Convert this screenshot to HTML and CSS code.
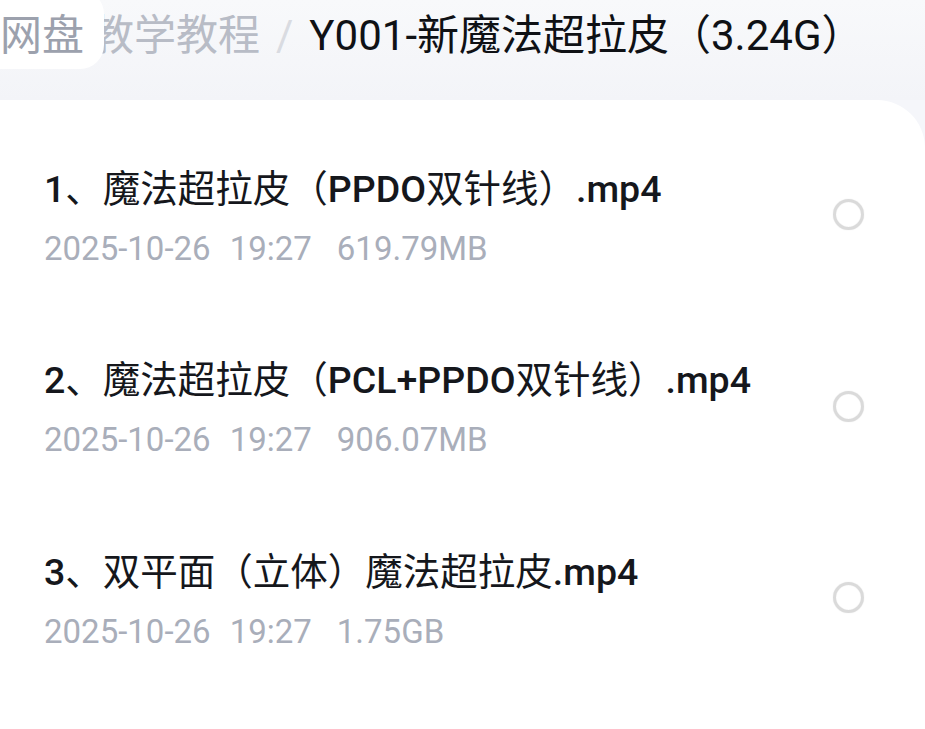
FILE: index.html
```html
<!DOCTYPE html>
<html lang="zh-CN">
<head>
    <meta charset="UTF-8">
    <meta name="viewport" content="width=device-width, initial-scale=1.0">
    <title>Y001-新魔法超拉皮（3.24G）</title>
    <link rel="stylesheet" href="styles.css">
</head>
<body>
    <div class="header">
        <div class="root-crumb">网盘</div>
        <div class="crumbs">
            <span class="crumb">教学教程</span>
            <span class="crumb-sep">/</span>
            <span class="crumb current">Y001-新魔法超拉皮（3.24G）</span>
        </div>
    </div>

    <div class="file-list">
        <div class="file-row">
            <div class="file-info">
                <div class="file-name"><b>1</b>、魔法超拉皮（<b>PPDO</b>双针线）<b>.mp4</b></div>
                <div class="file-meta">
                    <span class="meta-date">2025-10-26</span>
                    <span class="meta-time">19:27</span>
                    <span class="meta-size">619.79MB</span>
                </div>
            </div>
            <span class="radio"></span>
        </div>

        <div class="file-row">
            <div class="file-info">
                <div class="file-name"><b>2</b>、魔法超拉皮（<b>PCL+PPDO</b>双针线）<b>.mp4</b></div>
                <div class="file-meta">
                    <span class="meta-date">2025-10-26</span>
                    <span class="meta-time">19:27</span>
                    <span class="meta-size">906.07MB</span>
                </div>
            </div>
            <span class="radio"></span>
        </div>

        <div class="file-row">
            <div class="file-info">
                <div class="file-name"><b>3</b>、双平面（立体）魔法超拉皮<b>.mp4</b></div>
                <div class="file-meta">
                    <span class="meta-date">2025-10-26</span>
                    <span class="meta-time">19:27</span>
                    <span class="meta-size">1.75GB</span>
                </div>
            </div>
            <span class="radio"></span>
        </div>
    </div>
</body>
</html>
```

FILE: styles.css
```css
body {
    margin: 0;
    padding: 0;
    height: 100vh;
    overflow: hidden;
    background: #f5f6fa;
    font-family: Roboto, 'Noto Sans CJK SC', sans-serif;
}

.header {
    position: relative;
    height: 100px;
    box-sizing: border-box;
    padding-top: 6px;
    overflow: hidden;
    background: linear-gradient(180deg, #f8f9fb 0%, #f3f4f8 100%);
}

.root-crumb {
    position: absolute;
    left: -30px;
    top: -10px;
    width: 134px;
    height: 79px;
    box-sizing: border-box;
    padding: 16px 0 0 30px;
    border-radius: 24px;
    background: #fff;
    color: #9ca1ad;
    font-size: 42px;
    line-height: 60px;
    z-index: 2;
}

.crumbs {
    display: flex;
    align-items: baseline;
    margin-left: 92px;
    font-size: 42px;
    line-height: 60px;
    white-space: nowrap;
}

.crumb {
    color: #b8bcc6;
}

.crumb-sep {
    margin: 0 16px;
    color: #d9dbe1;
}

.crumb.current {
    color: #0f1115;
}

.file-list {
    background: #fff;
    border-radius: 0 48px 0 0;
    padding-top: 23px;
    height: 629px;
    box-sizing: border-box;
}

.file-row {
    display: flex;
    align-items: center;
    justify-content: space-between;
    height: 191.5px;
    padding: 0 61px 0 44px;
}

.file-name {
    font-size: 37.5px;
    line-height: 46px;
    font-weight: 400;
    color: #15171c;
    white-space: nowrap;
}

.file-name b {
    font-weight: 500;
}

.file-meta {
    display: flex;
    margin-top: 14px;
    font-size: 33px;
    line-height: 46px;
    color: #a9aeba;
}

.meta-date {
    margin-right: 19px;
}

.meta-time {
    margin-right: 25px;
}

.radio {
    width: 25px;
    height: 25px;
    margin-bottom: 8px;
    border: 3.5px solid #dadada;
    border-radius: 50%;
    box-shadow: 0 0 1px rgba(0, 0, 0, 0.15), inset 0 0 1px rgba(0, 0, 0, 0.12);
    flex-shrink: 0;
}
```
